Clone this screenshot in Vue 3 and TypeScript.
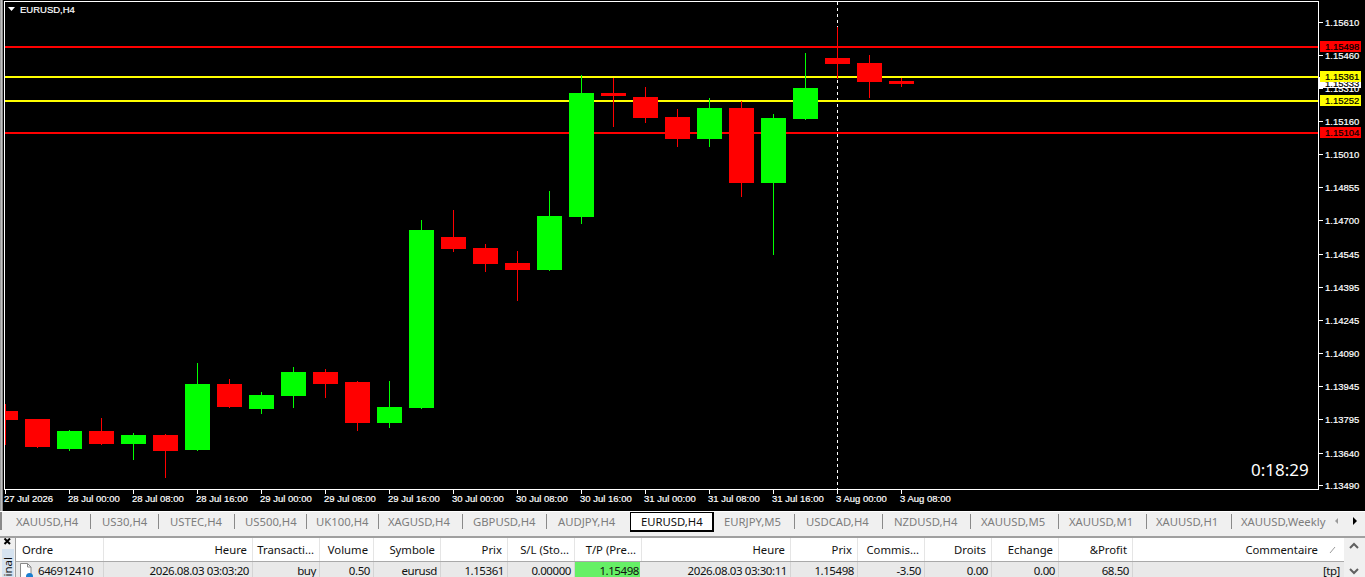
<script setup lang="ts">
type Candle = [number, number, number, number, 'r' | 'g']
const raw: Candle[] = [
  [411, 420, 404, 445, 'r'], [419, 447, 419, 448, 'r'], [431, 449, 430, 451, 'g'], [431, 444, 418, 445, 'r'],
  [435, 444, 433, 460, 'g'], [435, 451, 434, 478, 'r'], [384, 450, 363, 451, 'g'], [384, 407, 379, 408, 'r'],
  [395, 409, 392, 414, 'g'], [372, 396, 367, 408, 'g'], [372, 384, 369, 398, 'r'], [382, 423, 381, 431, 'r'],
  [407, 423, 381, 428, 'g'], [230, 408, 220, 409, 'g'], [237, 249, 210, 252, 'r'], [248, 264, 244, 272, 'r'],
  [263, 270, 251, 301, 'r'], [216, 270, 191, 271, 'g'], [93, 217, 75, 224, 'g'], [93, 96, 78, 127, 'r'],
  [97, 118, 87, 123, 'r'], [117, 139, 109, 147, 'r'], [108, 139, 98, 147, 'g'], [108, 183, 101, 197, 'r'],
  [118, 183, 114, 255, 'g'], [88, 119, 53, 120, 'g'], [58, 64, 27, 79, 'r'], [63, 82, 55, 98, 'r'], [81, 84, 78, 87, 'r'],
]
const candles = raw.map(([top, bottom, high, low, dir], i) => {
  const c = 5 + 32 * i
  const left = Math.max(c - 12, 5)
  return { c, x: left, w: c + 13 - left, top, h: bottom - top, high, wh: low - high, color: dir === 'r' ? '#ff0000' : '#00ff00' }
})
const prices: [string, number][] = [
  ['1.15610', 22], ['1.15460', 55], ['1.15310', 88], ['1.15160', 121], ['1.15010', 154], ['1.14855', 187], ['1.14700', 220],
  ['1.14545', 254], ['1.14395', 287], ['1.14245', 320], ['1.14090', 353], ['1.13945', 386], ['1.13795', 419], ['1.13640', 453], ['1.13490', 485],
]
const times = ['27 Jul 2026', '28 Jul 00:00', '28 Jul 08:00', '28 Jul 16:00', '29 Jul 00:00', '29 Jul 08:00', '29 Jul 16:00', '30 Jul 00:00', '30 Jul 08:00', '30 Jul 16:00', '31 Jul 00:00', '31 Jul 08:00', '31 Jul 16:00', '3 Aug 00:00', '3 Aug 08:00']
const levels = [
  { y: 46, color: '#ff0000', label: '1.15498', top: 41 },
  { y: 76, color: '#ffff00', label: '1.15361', top: 71 },
  { y: 100, color: '#ffff00', label: '1.15252', top: 95 },
  { y: 132, color: '#ff0000', label: '1.15104', top: 127 },
]
const tabs: [string, number, number][] = [
  ['XAUUSD,H4', 86, 11], ['US30,H4', 68, 11], ['USTEC,H4', 76, 11], ['US500,H4', 72, 10], ['UK100,H4', 72, 9], ['XAGUSD,H4', 84, 9],
  ['GBPUSD,H4', 84, 10], ['AUDJPY,H4', 83, 11], ['EURUSD,H4', 84, 10], ['EURJPY,M5', 81, 10], ['USDCAD,H4', 88, 11], ['NZDUSD,H4', 88, 11],
  ['XAUUSD,M5', 88, 10], ['XAUUSD,M1', 88, 10], ['XAUUSD,H1', 85, 9], ['XAUUSD,Weekly', 98, 9],
]
const heads = ['Ordre', 'Heure', 'Transacti...', 'Volume', 'Symbole', 'Prix', 'S/L (Sto...', 'T/P (Pre...', 'Heure', 'Prix', 'Commis...', 'Droits', 'Echange', '&Profit', 'Commentaire']
const cells = ['2026.08.03 03:03:20', 'buy', '0.50', 'eurusd', '1.15361', '0.00000', '1.15498', '2026.08.03 03:30:11', '1.15498', '-3.50', '0.00', '0.00', '68.50', '[tp]']
</script>

<template>
  <div class="screen">
    <div class="chart">
      <div class="edge"></div>
      <svg class="plot" width="1362" height="511" viewBox="3 0 1362 511">
        <rect x="4" y="1" width="1315" height="1" fill="#fff" />
        <rect x="4" y="1" width="1" height="489" fill="#fff" />
        <rect x="1318" y="1" width="1" height="489" fill="#fff" />
        <rect x="4" y="489" width="1315" height="1" fill="#fff" />
        <text class="title" x="20" y="13">EURUSD,H4</text>
        <path d="M8 7h7l-3.500 4z" fill="#fff" />
        <line x1="837.500" y1="2" x2="837.500" y2="489" stroke="#fff" stroke-dasharray="3 3" />
        <rect v-for="l in levels" :key="l.label + 'l'" x="5" :y="l.y" width="1313" height="2" :fill="l.color" />
        <g v-for="k in candles" :key="k.c">
          <rect :x="k.c" :y="k.high" width="1" :height="k.wh" :fill="k.color" />
          <rect :x="k.x" :y="k.top" :width="k.w" :height="k.h" :fill="k.color" />
        </g>
        <g v-for="p in prices" :key="p[0]">
          <rect x="1319" :y="p[1]" width="4" height="1" fill="#fff" />
          <text class="axis" x="1325" :y="p[1] + 4">{{ p[0] }}</text>
        </g>
        <g v-for="(t, i) in times" :key="t">
          <rect :x="5 + 64 * i" y="490" width="1" height="4" fill="#fff" />
          <text class="axis" :x="4 + 64 * i" y="502">{{ t }}</text>
        </g>
        <rect x="1318" y="77" width="43" height="11" fill="#fff" />
        <text class="axis dark" x="1325" y="87">1.15333</text>
        <g v-for="l in levels" :key="l.label">
          <rect x="1320" :y="l.top" width="41" height="11" :fill="l.color" />
          <text class="axis dark" x="1325" :y="l.top + 9">{{ l.label }}</text>
        </g>
        <text class="clock" x="1251" y="476">0:18:29</text>
      </svg>
    </div>

    <div class="tabbar">
      <div class="tabs">
        <div v-for="t in tabs" :key="t[0]" class="tab" :class="{ active: t[0] === 'EURUSD,H4' }" :style="{ width: t[1] + 'px', paddingLeft: t[2] + 'px' }">{{ t[0] }}</div>
      </div>
      <div class="arrows">
        <svg width="35" height="18" viewBox="0 0 35 18">
          <path d="M8 6v6l-3-3z" fill="#9a9a9a" />
          <path d="M23 5v8l4-4z" fill="#000" />
        </svg>
      </div>
    </div>

    <div class="terminal">
      <div class="side">
        <svg class="close" width="9" height="9" viewBox="0 0 9 9">
          <path d="M1.500 0.500l5.500 5.500M7 0.500l-5.500 5.500" stroke="#000" stroke-width="2" />
        </svg>
        <div class="vtab"><span>Terminal</span></div>
      </div>
      <div class="table">
        <div class="grid head">
          <div v-for="(h, i) in heads" :key="i" class="hcell" :class="{ left: i === 0 }">{{ h }}</div>
          <svg class="sort" width="8" height="8" viewBox="0 0 8 8"><path d="M1 7l5-6" stroke="#9a9a9a" /></svg>
        </div>
        <div class="grid row">
          <div class="cell left first">
            <svg width="16" height="15" viewBox="0 0 16 15">
              <path d="M1.500 0.500h7l3.500 3.500v11h-10.500z" fill="#fff" stroke="#8a8a8a" />
              <path d="M8.500 0.500v3.500h3.500" fill="none" stroke="#8a8a8a" />
              <circle cx="10.500" cy="13.500" r="3.500" fill="#1a7fd0" />
            </svg>
            <span>646912410</span>
          </div>
          <div v-for="(c, i) in cells" :key="i" class="cell" :class="{ hit: i === 6 }">{{ c }}</div>
        </div>
      </div>
      <div class="scroll">
        <svg width="12" height="8" viewBox="0 0 12 8"><path d="M2 6l4-4 4 4" fill="none" stroke="#606060" stroke-width="2" /></svg>
        <svg class="down" width="12" height="8" viewBox="0 0 12 8"><path d="M2 2l4 4 4-4" fill="none" stroke="#606060" stroke-width="2" /></svg>
      </div>
    </div>
  </div>
</template>

<style>
html, body { margin: 0; overflow: hidden; background: #f0f0f0; }
</style>

<style scoped>
.screen { width: 1365px; height: 577px; overflow: hidden; display: flex; flex-direction: column; font-family: "Noto Sans", "Liberation Sans", sans-serif; font-size: 11.3px; }
.chart { height: 511px; flex: none; display: flex; background: #000; }
.edge { width: 3px; background: linear-gradient(90deg, #8c8c8c, #c8c8c8 60%, #606060); }
.plot { display: block; }
.title { font: 9.500px "Liberation Sans", sans-serif; fill: #fff; stroke: #fff; stroke-width: 0.2px; }
.axis { font: 9.500px "Liberation Sans", sans-serif; fill: #fff; stroke: #fff; stroke-width: 0.2px; }
.axis.dark { fill: #000; stroke: #000; }
.clock { font: 17px "Noto Sans", sans-serif; fill: #fff; }

.tabbar { height: 24px; flex: none; display: flex; background: #f0f0f0; border-top: 1px solid #fff; }
.tabs { flex: none; display: flex; height: 18px; padding-left: 3px; border-left: 2px solid #8a8a8a; }
.tab { box-sizing: border-box; height: 15px; margin-top: 2px; line-height: 15px; color: #7d7d7d; white-space: nowrap; overflow: hidden; border-right: 1px solid #8a8a8a; }
.tab:has(+ .active), .tab:last-child { border-right: 0; }
.tab.active { background: #fff; color: #111; border: 1px solid #000; border-bottom-width: 2px; border-right-width: 2px; margin-top: 0; line-height: 17px; height: 20px; }
.arrows { flex: 1; display: flex; }

.terminal { flex: 1; display: flex; min-height: 0; border-top: 2px solid #a0a0a0; background: #f0f0f0; }
.side { width: 15px; flex: none; display: flex; flex-direction: column; align-items: center; }
.close { flex: none; }
.vtab { margin-top: 2px; width: 12px; flex: 1; min-height: 0; background: #d6e3f0; overflow: hidden; display: flex; flex-direction: column; }
.vtab span { writing-mode: vertical-rl; transform: rotate(180deg); flex: none; margin-top: 8px; line-height: 12px; color: #111; font-size: 11.5px; }
.table { width: 1329px; flex: none; border-left: 1px solid #a0a0a0; box-sizing: border-box; }
.grid { display: grid; grid-template-columns: 88px 149px 67px 54px 67px 67px 67px 67px 149px 67px 67px 67px 67px 74px 211px; }
.head { height: 23px; background: #fff; border-bottom: 1px solid #a9a9a9; position: relative; }
.hcell { line-height: 23px; text-align: right; padding-right: 5px; color: #111; border-right: 1px solid #e5e5e5; white-space: nowrap; overflow: hidden; box-sizing: border-box; }
.hcell.left { text-align: left; padding-left: 6px; }
.hcell:last-of-type { padding-right: 26px; border-right: 0; }
.sort { position: absolute; right: 7px; top: 8px; }
.row { height: 16px; background: #e9e9e9; font-size: 11.5px; letter-spacing: -0.42px; }
.cell { height: 16px; line-height: 18px; text-align: right; padding-right: 3px; color: #111; border-right: 1px solid #d4d4d4; white-space: nowrap; overflow: hidden; box-sizing: border-box; }
.cell.first { display: flex; align-items: flex-start; gap: 3px; padding-left: 3px; text-align: left; }
.cell.first svg { flex: none; margin-top: 1px; }
.cell.hit { background: #66f066; border-right: 0; margin-right: 2px; padding-right: 1px; }
.cell:last-child { border-right: 0; padding-right: 4px; }
.scroll { flex: 1; display: flex; flex-direction: column; align-items: center; padding: 4px 2px 0 0; background: #f0f0f0; }
.down { margin-top: 17px; }
</style>
